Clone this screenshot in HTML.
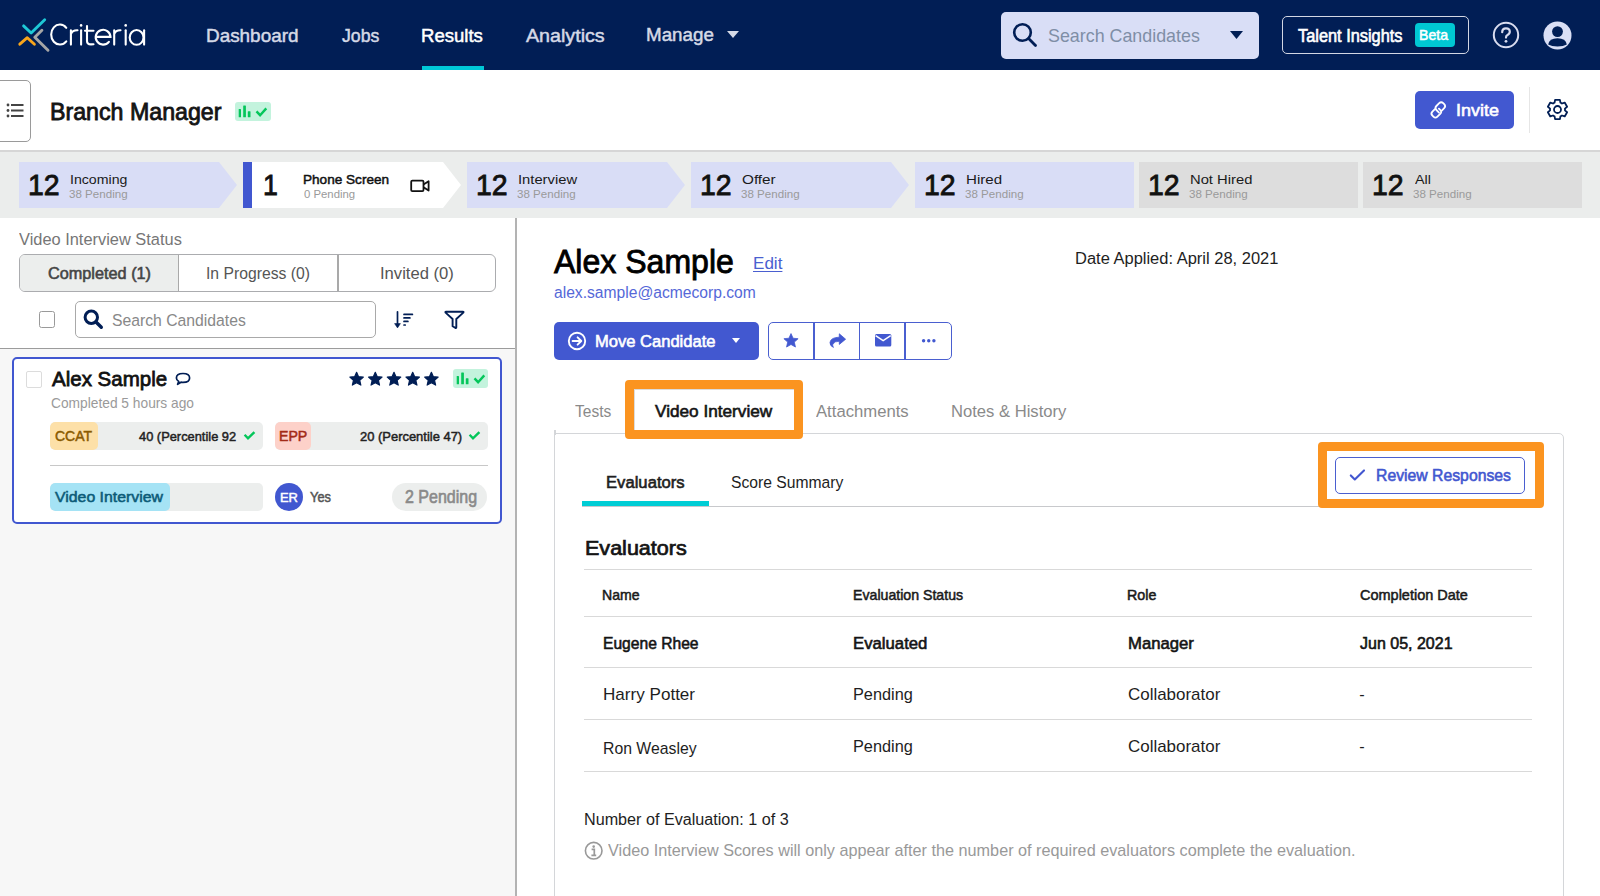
<!DOCTYPE html>
<html><head><meta charset="utf-8"><title>Criteria - Branch Manager</title>
<style>
html,body{margin:0;padding:0;}
body{width:1600px;height:896px;overflow:hidden;position:relative;background:#fff;font-family:"Liberation Sans",sans-serif;}
.a{position:absolute;box-sizing:border-box;}
.t{position:absolute;white-space:nowrap;line-height:1;transform-origin:0 0;font-family:"Liberation Sans",sans-serif;}
svg{position:absolute;overflow:visible;}

</style></head><body>
<!-- NAV -->
<div class="a" style="left:0;top:0;width:1600px;height:70px;background:#011e55"></div>
<svg style="left:0;top:0" width="160" height="70" viewBox="0 0 160 70">
  <g fill="none" stroke-linecap="round" stroke-linejoin="round" stroke-width="2.9">
    <polyline points="23.6,25.9 31.1,33 44.7,19.8" stroke="#1ec8d6"/>
    <polyline points="19.8,44.2 27.3,37.7 34.4,44.2" stroke="#f8a51c"/>
    <polyline points="41.9,30.2 34.8,37.2 48,50.3" stroke="#a6a6a6"/>
  </g>
  <g fill="none" stroke="#fff" stroke-width="2.1" stroke-linecap="round">
    <path d="M66.3,27.8 A8.7,10 0 1 0 66.3,41.3"/>
    <path d="M70.9,30.3 V44.6 M70.9,34 Q72.5,30.1 77.5,30.3"/>
    <path d="M81.1,30.3 V44.6"/>
    <path d="M87,26 V41 Q87,44.4 91,44.4 L93.5,44.3 M85,30.8 H93.5"/>
    <path d="M95.8,36.9 H110.5 A7.4,7.4 0 1 0 108.9,41.8"/>
    <path d="M114.2,30.3 V44.6 M114.2,34 Q115.8,30.1 120.5,30.3"/>
    <path d="M125.7,30.3 V44.6"/>
    <ellipse cx="136.6" cy="37.4" rx="6.9" ry="7.4"/>
    <path d="M144.1,30.3 V44.6"/>
  </g>
  <circle cx="81.1" cy="25.4" r="1.3" fill="#fff"/>
  <circle cx="125.7" cy="25.4" r="1.3" fill="#fff"/>
</svg>
<div class="a" style="left:422px;top:66px;width:62px;height:4px;background:#00c8d7"></div>
<svg style="left:727px;top:31px" width="12" height="7" viewBox="0 0 12 7"><path d="M0,0 H12 L6,7 Z" fill="#d5d9e6"/></svg>
<!-- nav search -->
<div class="a" style="left:1001px;top:12px;width:258px;height:47px;background:#d9def6;border-radius:5px"></div>
<svg style="left:1012px;top:22px" width="26" height="26" viewBox="0 0 26 26"><circle cx="10.5" cy="10.5" r="8.3" fill="none" stroke="#011e55" stroke-width="2.6"/><path d="M16.6,16.6 L23.5,23.5" stroke="#011e55" stroke-width="2.8" stroke-linecap="round"/></svg>
<svg style="left:1229.5px;top:31px" width="13" height="8" viewBox="0 0 13 8"><path d="M0,0 H13 L6.5,8 Z" fill="#011e55"/></svg>
<!-- talent insights -->
<div class="a" style="left:1282px;top:16px;width:187px;height:38px;border:1.5px solid #d3d7e3;border-radius:5px"></div>
<div class="a" style="left:1415px;top:23px;width:40px;height:24px;background:#00c8d3;border-radius:4px"></div>
<svg style="left:1492px;top:21px" width="28" height="28" viewBox="0 0 28 28"><circle cx="14" cy="14" r="12.2" fill="none" stroke="#d9dcef" stroke-width="2"/><path d="M10.2,11.2 Q10.2,7.3 14,7.3 Q17.8,7.3 17.8,10.8 Q17.8,13 15.2,14.2 Q14,14.8 14,16.6" fill="none" stroke="#d9dcef" stroke-width="2.2" stroke-linecap="round"/><circle cx="14" cy="20.3" r="1.4" fill="#d9dcef"/></svg>
<svg style="left:1543px;top:21px" width="29" height="29" viewBox="0 0 29 29"><defs><clipPath id="uc"><circle cx="14.5" cy="14.5" r="14"/></clipPath></defs><circle cx="14.5" cy="14.5" r="14" fill="#dadff5"/><circle cx="14.5" cy="10.6" r="5.4" fill="#011e55"/><path d="M5.2,23.6 Q6.2,17.2 14.5,17.2 Q22.8,17.2 23.8,23.6 Q20.5,25.6 14.5,25.6 Q8.5,25.6 5.2,23.6 Z" fill="#011e55"/></svg>

<!-- HEADER -->
<div class="a" style="left:0;top:150px;width:1600px;height:2px;background:#d6d6d6"></div>
<div class="a" style="left:-6px;top:80px;width:37px;height:62px;border:1.5px solid #9a9a9a;border-radius:5px;background:#fff"></div>
<svg style="left:6px;top:103px" width="18" height="16" viewBox="0 0 18 16"><g fill="#444"><circle cx="2" cy="2" r="1.4"/><circle cx="2" cy="7.5" r="1.4"/><circle cx="2" cy="13" r="1.4"/><rect x="5" y="1" width="12.5" height="2"/><rect x="5" y="6.5" width="12.5" height="2"/><rect x="5" y="12" width="12.5" height="2"/></g></svg>
<div class="a" style="left:235.2px;top:101.8px;width:35.4px;height:19px;background:#c3f3dd;border-radius:3px"></div>
<svg style="left:235.2px;top:101.8px" width="36" height="19" viewBox="0 0 36 19"><g fill="#04c65a"><rect x="3.7" y="6.9" width="2.3" height="8.4" rx="0.5"/><rect x="8.2" y="3.5" width="2.7" height="11.8" rx="0.5"/><rect x="12.8" y="9.2" width="2.7" height="6.1" rx="0.5"/></g><path d="M21.5,9.4 L25.1,13.2 L31.3,6.4" fill="none" stroke="#04c65a" stroke-width="2.4"/></svg>
<div class="a" style="left:1415px;top:91px;width:99px;height:38px;background:#4258d0;border-radius:5px"></div>
<svg style="left:1424.5px;top:98.2px" width="28" height="28" viewBox="0 0 28 28"><g fill="none" stroke="#fff" stroke-width="1.8" stroke-linecap="round"><path d="M14,14.6 L11.4,12 Q9.4,10 11.4,8 L14.2,5.2 Q16.2,3.2 18.2,5.2 L19.2,6.2 Q21.2,8.2 19.2,10.2 L16.8,12.6"/><path d="M9.9,11.2 L7.4,13.7 Q5.4,15.7 7.4,17.7 L8.4,18.7 Q10.4,20.7 12.4,18.7 L15.2,15.9 Q17.2,13.9 15.2,11.9 L13.9,10.6"/></g></svg>
<div class="a" style="left:1528.5px;top:87px;width:1.5px;height:46px;background:#e6e6e6"></div>
<svg style="left:1545.4px;top:97.25px" width="25" height="25" viewBox="0 0 25 25"><path fill="none" stroke="#011e55" stroke-width="1.8" stroke-linejoin="round" d="M9.57,5.60 L10.08,2.80 L14.92,2.80 L15.43,5.60 A7.5,7.5 0 0 1 17.01,6.51 L19.69,5.55 L22.11,9.74 L19.94,11.59 A7.5,7.5 0 0 1 19.94,13.41 L22.11,15.26 L19.69,19.45 L17.01,18.49 A7.5,7.5 0 0 1 15.43,19.40 L14.92,22.20 L10.08,22.20 L9.57,19.40 A7.5,7.5 0 0 1 7.99,18.49 L5.31,19.45 L2.89,15.26 L5.06,13.41 A7.5,7.5 0 0 1 5.06,11.59 L2.89,9.74 L5.31,5.55 L7.99,6.51 A7.5,7.5 0 0 1 9.57,5.60 Z"/><circle cx="12.5" cy="12.5" r="3.5" fill="none" stroke="#011e55" stroke-width="1.8"/></svg>

<!-- PIPELINE -->
<div class="a" style="left:0;top:152px;width:1600px;height:66px;background:#ebedec"></div>
<div class="a" style="left:19px;top:162px;width:218px;height:46px;background:#d9ddf6;clip-path:polygon(0 0,200px 0,218px 23px,200px 46px,0 46px)"></div>
<div class="a" style="left:243px;top:162px;width:218px;height:46px;background:#fff;clip-path:polygon(0 0,200px 0,218px 23px,200px 46px,0 46px)"></div>
<div class="a" style="left:243px;top:162px;width:9px;height:46px;background:#4157d0"></div>
<svg style="left:409.6px;top:179.2px" width="21" height="14" viewBox="0 0 21 14"><rect x="1.2" y="1.6" width="12.3" height="10.6" rx="1.2" fill="none" stroke="#111" stroke-width="1.8"/><path d="M13.5,5.6 L18.6,2.2 V11.6 L13.5,8.2" fill="none" stroke="#111" stroke-width="1.8" stroke-linejoin="round"/></svg>
<div class="a" style="left:467px;top:162px;width:218px;height:46px;background:#d9ddf6;clip-path:polygon(0 0,200px 0,218px 23px,200px 46px,0 46px)"></div>
<div class="a" style="left:691px;top:162px;width:218px;height:46px;background:#d9ddf6;clip-path:polygon(0 0,200px 0,218px 23px,200px 46px,0 46px)"></div>
<div class="a" style="left:915px;top:162px;width:219px;height:46px;background:#d9ddf6"></div>
<div class="a" style="left:1139px;top:162px;width:219px;height:46px;background:#dddddd"></div>
<div class="a" style="left:1363px;top:162px;width:219px;height:46px;background:#dddddd"></div>

<!-- LEFT PANEL -->
<div class="a" style="left:0;top:349px;width:515px;height:547px;background:#f7f7f7"></div>
<div class="a" style="left:0;top:347.5px;width:515px;height:1.5px;background:#9c9c9c"></div>
<div class="a" style="left:515px;top:218px;width:2px;height:678px;background:#b3b3b3"></div>
<div class="a" style="left:19px;top:254px;width:477px;height:37.5px;border:1.5px solid #abacaf;border-radius:6px;background:#fff;overflow:hidden"><div style="position:absolute;left:0;top:0;width:158px;height:100%;background:#eceeed;border-right:1.5px solid #a9a9a9"></div><div style="position:absolute;left:317px;top:0;width:1.5px;height:100%;background:#a9a9a9"></div></div>
<div class="a" style="left:38.5px;top:311px;width:16.5px;height:17px;border:1.5px solid #9a9a9a;border-radius:2.5px;background:#fff"></div>
<div class="a" style="left:75px;top:301px;width:301px;height:37px;border:1.5px solid #a9a9a9;border-radius:5px;background:#fff"></div>
<svg style="left:83px;top:309px" width="21" height="21" viewBox="0 0 21 21"><circle cx="8.3" cy="8.3" r="6.2" fill="none" stroke="#011e55" stroke-width="3"/><path d="M13,13 L18.3,18.3" stroke="#011e55" stroke-width="3.4" stroke-linecap="round"/></svg>
<svg style="left:393px;top:310px" width="22" height="20" viewBox="0 0 22 20"><g stroke="#011e55" stroke-width="1.7" fill="none" stroke-linecap="round"><path d="M4.5,1.8 V14.5"/><path d="M11,4.4 H19.4 M11,7.9 H16.9 M11,11.4 H14.9 M11,15 H12.2"/></g><path d="M1.6,13.6 H7.4 L4.5,17.9 Z" fill="#011e55" stroke="#011e55" stroke-width="0.6" stroke-linejoin="round"/></svg>
<svg style="left:443px;top:309px" width="23" height="21" viewBox="0 0 23 21"><path d="M3,2.7 H19.9 Q21,2.7 20.3,3.6 L13.3,10 V18.2 Q13.3,19.4 12.2,18.8 L9.6,17.2 V10 L2.6,3.6 Q2,2.7 3,2.7 Z" fill="none" stroke="#011e55" stroke-width="1.9" stroke-linejoin="round"/></svg>
<!-- card -->
<div class="a" style="left:12px;top:357px;width:490px;height:167px;border:2px solid #4157d0;border-radius:5px;background:#fff"></div>
<div class="a" style="left:26px;top:371px;width:16px;height:16.5px;border:1.5px solid #dcdcdc;border-radius:2px"></div>
<svg style="left:175px;top:372px" width="16" height="14" viewBox="0 0 16 14"><path d="M8,1.5 C12,1.5 14.6,3.3 14.6,6 C14.6,8.7 12,10.4 8,10.4 Q7,10.4 6,10.2 L2.6,12.4 L3.8,9.4 Q1.4,8.2 1.4,6 C1.4,3.3 4,1.5 8,1.5 Z" fill="none" stroke="#011e55" stroke-width="1.7" stroke-linejoin="round"/></svg>
<svg style="left:348.2px;top:371px" width="92" height="17" viewBox="0 0 92 17"><defs><path id="st" transform="translate(8,7.9) scale(0.9) translate(-8,-7.9)" d="M8,0.6 L10.2,5.4 L15.5,6 L11.5,9.6 L12.7,14.8 L8,12.1 L3.3,14.8 L4.5,9.6 L0.5,6 L5.8,5.4 Z"/></defs><g fill="#011e55" stroke="#011e55" stroke-width="1.3" stroke-linejoin="round"><use href="#st" x="0.6"/><use href="#st" x="19.3"/><use href="#st" x="38"/><use href="#st" x="56.7"/><use href="#st" x="75.4"/></g></svg>
<div class="a" style="left:453.2px;top:369.3px;width:35.1px;height:18.6px;background:#c3f3dd;border-radius:3px"></div>
<svg style="left:453.2px;top:369.3px" width="36" height="19" viewBox="0 0 36 19"><g fill="#04c65a"><rect x="3.7" y="6.9" width="2.3" height="8.4" rx="0.5"/><rect x="8.2" y="3.5" width="2.7" height="11.8" rx="0.5"/><rect x="12.8" y="9.2" width="2.7" height="6.1" rx="0.5"/></g><path d="M21.5,9.4 L25.1,13.2 L31.3,6.4" fill="none" stroke="#04c65a" stroke-width="2.4"/></svg>
<div class="a" style="left:50px;top:422px;width:213px;height:28px;background:#eceeed;border-radius:5px;overflow:hidden"><div style="position:absolute;left:0;top:0;width:48px;height:100%;background:#fde0a8;border-radius:5px"></div></div>
<svg style="left:242px;top:428px" width="15" height="14" viewBox="0 0 15 14"><path d="M2.6,6.8 L6,10.4 L12.4,4.2" fill="none" stroke="#04c65a" stroke-width="2.4" stroke-linecap="butt" stroke-linejoin="miter"/></svg>
<div class="a" style="left:275px;top:422px;width:213px;height:28px;background:#eceeed;border-radius:5px;overflow:hidden"><div style="position:absolute;left:0;top:0;width:36px;height:100%;background:#fdd1c9;border-radius:5px"></div></div>
<svg style="left:467px;top:428px" width="15" height="14" viewBox="0 0 15 14"><path d="M2.6,6.8 L6,10.4 L12.4,4.2" fill="none" stroke="#04c65a" stroke-width="2.4" stroke-linecap="butt" stroke-linejoin="miter"/></svg>
<div class="a" style="left:50px;top:465px;width:438px;height:1.2px;background:#c8c8c8"></div>
<div class="a" style="left:50px;top:483px;width:213px;height:28px;background:#eceeed;border-radius:5px;overflow:hidden"><div style="position:absolute;left:0;top:0;width:120px;height:100%;background:#a5e3f5;border-radius:5px"></div></div>
<div class="a" style="left:275.3px;top:482.5px;width:28px;height:28px;background:#4157d0;border-radius:50%"></div>
<div class="a" style="left:392px;top:482.5px;width:95px;height:28.5px;background:#eceeed;border-radius:14px"></div>

<!-- RIGHT -->
<div class="a" style="left:554px;top:322px;width:205px;height:37.5px;background:#4258d0;border-radius:5px"></div>
<svg style="left:567px;top:331px" width="21" height="20" viewBox="0 0 21 20"><circle cx="10" cy="10" r="8.2" fill="none" stroke="#fff" stroke-width="1.9"/><path d="M5.6,10 H14 M10.6,6.3 L14.3,10 L10.6,13.7" fill="none" stroke="#fff" stroke-width="1.9" stroke-linecap="round" stroke-linejoin="round"/></svg>
<svg style="left:731.5px;top:338px" width="9" height="6" viewBox="0 0 9 6"><path d="M0,0 H8 L4,5 Z" fill="#fff"/></svg>
<div class="a" style="left:768px;top:322px;width:184px;height:37.5px;border:1.5px solid #4a5fd0;border-radius:5px"><div style="position:absolute;left:44.2px;top:0;width:1.5px;height:100%;background:#4a5fd0"></div><div style="position:absolute;left:89.8px;top:0;width:1.5px;height:100%;background:#4a5fd0"></div><div style="position:absolute;left:135.4px;top:0;width:1.5px;height:100%;background:#4a5fd0"></div></div>
<svg style="left:783.2px;top:333px" width="16" height="15.2" viewBox="0 0 16 16"><path d="M8,0.6 L10.2,5.5 L15.5,6 L11.5,9.6 L12.7,14.8 L8,12.1 L3.3,14.8 L4.5,9.6 L0.5,6 L5.8,5.5 Z" fill="#4258d0" stroke="#4258d0" stroke-width="0.8" stroke-linejoin="round"/></svg>
<svg style="left:828.5px;top:333px" width="18" height="16" viewBox="0 0 18 16"><path d="M10.3,0.8 L16.6,6.2 L10.3,11.4 V8.3 Q5.6,8 3.8,11.2 Q3.4,12.6 4.4,14.4 Q0.6,12.6 1,9.4 Q1.8,4.4 10.3,4.2 Z" fill="#4258d0" stroke="#4258d0" stroke-width="0.8" stroke-linejoin="round"/></svg>
<svg style="left:875px;top:334.4px" width="16.3" height="12.5" viewBox="0 0 16.3 12.5"><rect x="0" y="0" width="16.3" height="12.5" rx="1.5" fill="#4258d0"/><path d="M0.6,1.6 L8.15,6.6 L15.7,1.6" fill="none" stroke="#fff" stroke-width="1.5"/></svg>
<svg style="left:920px;top:338px" width="17" height="5" viewBox="0 0 17 5"><g fill="#4258d0"><circle cx="3.6" cy="2.75" r="1.7"/><circle cx="8.75" cy="2.75" r="1.7"/><circle cx="13.9" cy="2.75" r="1.7"/></g></svg>

<!-- content box -->
<div class="a" style="left:554px;top:433px;width:1010px;height:480px;border:1.5px solid #d4d6d9;border-top-right-radius:5px"></div>
<div class="a" style="left:554px;top:429.5px;width:1.5px;height:5px;background:#d4d6d9"></div>
<!-- video interview tab (white with light border) -->
<div class="a" style="left:633.5px;top:388.5px;width:161px;height:46px;background:#fff;border:1px solid #dcdcdc;border-bottom:none"></div>
<div class="a" style="left:625px;top:380px;width:178px;height:59px;border:9px solid #fb9420;border-radius:4px"></div>
<!-- subtabs -->
<div class="a" style="left:582px;top:506px;width:950px;height:1px;background:#c8c9cc"></div>
<div class="a" style="left:582px;top:501px;width:127px;height:5px;background:#00cdd5"></div>
<div class="a" style="left:1318px;top:442px;width:226px;height:66px;background:#fff;border:9px solid #fb9420;border-radius:4px"></div>
<div class="a" style="left:1335px;top:457px;width:190px;height:37px;border:1.5px solid #4a5fd0;border-radius:5px"></div>
<svg style="left:1349px;top:468px" width="17" height="14" viewBox="0 0 17 14"><path d="M1.8,7.4 L5.8,11.4 L15,2.4" fill="none" stroke="#4257d0" stroke-width="2.1" stroke-linecap="round" stroke-linejoin="round"/></svg>
<!-- table lines -->
<div class="a" style="left:584px;top:569px;width:948px;height:1px;background:#d9d9d9"></div>
<div class="a" style="left:584px;top:616px;width:948px;height:1px;background:#d9d9d9"></div>
<div class="a" style="left:584px;top:667px;width:948px;height:1px;background:#d9d9d9"></div>
<div class="a" style="left:584px;top:719px;width:948px;height:1px;background:#d9d9d9"></div>
<div class="a" style="left:584px;top:771px;width:948px;height:1px;background:#d9d9d9"></div>
<svg style="left:583.5px;top:841px" width="20" height="20" viewBox="0 0 20 20"><circle cx="9.7" cy="9.7" r="8.3" fill="none" stroke="#999" stroke-width="1.6"/><circle cx="9.7" cy="5.6" r="1.3" fill="#999"/><path d="M7.6,8.4 H10.3 V14.3 M7.4,14.3 H12.2" fill="none" stroke="#999" stroke-width="1.7"/></svg>

<span class="t" style="left:205.97px;top:25.74px;font-size:19.2px;font-weight:400;-webkit-text-stroke:0.50px #d5d9e6;color:#d5d9e6;transform:scaleX(0.9849);">Dashboard</span>
<span class="t" style="left:341.54px;top:25.74px;font-size:19.2px;font-weight:400;-webkit-text-stroke:0.50px #d5d9e6;color:#d5d9e6;transform:scaleX(0.9200);">Jobs</span>
<span class="t" style="left:421.46px;top:25.74px;font-size:19.2px;font-weight:400;-webkit-text-stroke:0.50px #ffffff;color:#ffffff;transform:scaleX(0.9676);">Results</span>
<span class="t" style="left:526.04px;top:26.44px;font-size:19.2px;font-weight:400;-webkit-text-stroke:0.50px #d5d9e6;color:#d5d9e6;transform:scaleX(1.0251);">Analytics</span>
<span class="t" style="left:645.98px;top:24.74px;font-size:19.2px;font-weight:400;-webkit-text-stroke:0.50px #d5d9e6;color:#d5d9e6;transform:scaleX(0.9784);">Manage</span>
<span class="t" style="left:1048.03px;top:26.64px;font-size:18.5px;font-weight:400;color:#7f8ea6;transform:scaleX(0.9651);">Search Candidates</span>
<span class="t" style="left:1297.62px;top:27.60px;font-size:17.6px;font-weight:400;-webkit-text-stroke:0.63px #ffffff;color:#ffffff;transform:scaleX(0.9289);">Talent Insights</span>
<span class="t" style="left:1419.22px;top:26.80px;font-size:15px;font-weight:400;-webkit-text-stroke:0.54px #ffffff;color:#ffffff;transform:scaleX(0.9398);">Beta</span>
<span class="t" style="left:50.27px;top:100.48px;font-size:24px;font-weight:400;-webkit-text-stroke:0.85px #141414;color:#141414;transform:scaleX(0.9663);">Branch Manager</span>
<span class="t" style="left:1456.48px;top:102.78px;font-size:16.8px;font-weight:400;-webkit-text-stroke:0.60px #ffffff;color:#ffffff;transform:scaleX(1.0684);">Invite</span>
<span class="t" style="left:28.45px;top:171.25px;font-size:29px;font-weight:400;-webkit-text-stroke:0.85px #111;color:#111;transform:scaleX(0.9806);">12</span>
<span class="t" style="left:70.23px;top:172.57px;font-size:13.5px;font-weight:400;color:#1a1a1a;transform:scaleX(1.0478);">Incoming</span>
<span class="t" style="left:69.36px;top:188.51px;font-size:11.8px;font-weight:400;color:#9a9a9a;transform:scaleX(0.9814);">38 Pending</span>
<span class="t" style="left:262.55px;top:171.25px;font-size:29px;font-weight:400;-webkit-text-stroke:0.85px #111;color:#111;transform:scaleX(0.9222);">1</span>
<span class="t" style="left:303.19px;top:172.57px;font-size:13.5px;font-weight:400;-webkit-text-stroke:0.49px #111;color:#111;transform:scaleX(1.0061);">Phone Screen</span>
<span class="t" style="left:304.18px;top:188.51px;font-size:11.8px;font-weight:400;color:#9a9a9a;transform:scaleX(0.9623);">0 Pending</span>
<span class="t" style="left:476.45px;top:171.25px;font-size:29px;font-weight:400;-webkit-text-stroke:0.85px #111;color:#111;transform:scaleX(0.9806);">12</span>
<span class="t" style="left:518.20px;top:172.57px;font-size:13.5px;font-weight:400;color:#1a1a1a;transform:scaleX(1.0928);">Interview</span>
<span class="t" style="left:517.36px;top:188.51px;font-size:11.8px;font-weight:400;color:#9a9a9a;transform:scaleX(0.9814);">38 Pending</span>
<span class="t" style="left:700.45px;top:171.25px;font-size:29px;font-weight:400;-webkit-text-stroke:0.85px #111;color:#111;transform:scaleX(0.9806);">12</span>
<span class="t" style="left:742.17px;top:172.57px;font-size:13.5px;font-weight:400;color:#1a1a1a;transform:scaleX(1.1328);">Offer</span>
<span class="t" style="left:741.36px;top:188.51px;font-size:11.8px;font-weight:400;color:#9a9a9a;transform:scaleX(0.9814);">38 Pending</span>
<span class="t" style="left:924.45px;top:171.25px;font-size:29px;font-weight:400;-webkit-text-stroke:0.85px #111;color:#111;transform:scaleX(0.9806);">12</span>
<span class="t" style="left:966.18px;top:172.57px;font-size:13.5px;font-weight:400;color:#1a1a1a;transform:scaleX(1.1176);">Hired</span>
<span class="t" style="left:965.36px;top:188.51px;font-size:11.8px;font-weight:400;color:#9a9a9a;transform:scaleX(0.9814);">38 Pending</span>
<span class="t" style="left:1148.45px;top:171.25px;font-size:29px;font-weight:400;-webkit-text-stroke:0.85px #111;color:#111;transform:scaleX(0.9806);">12</span>
<span class="t" style="left:1190.20px;top:172.57px;font-size:13.5px;font-weight:400;color:#1a1a1a;transform:scaleX(1.0933);">Not Hired</span>
<span class="t" style="left:1189.36px;top:188.51px;font-size:11.8px;font-weight:400;color:#9a9a9a;transform:scaleX(0.9814);">38 Pending</span>
<span class="t" style="left:1372.45px;top:171.25px;font-size:29px;font-weight:400;-webkit-text-stroke:0.85px #111;color:#111;transform:scaleX(0.9806);">12</span>
<span class="t" style="left:1415.38px;top:172.57px;font-size:13.5px;font-weight:400;color:#1a1a1a;transform:scaleX(1.0638);">All</span>
<span class="t" style="left:1413.36px;top:188.51px;font-size:11.8px;font-weight:400;color:#9a9a9a;transform:scaleX(0.9814);">38 Pending</span>
<span class="t" style="left:18.69px;top:231.00px;font-size:16.3px;font-weight:400;color:#767676;transform:scaleX(1.0070);">Video Interview Status</span>
<span class="t" style="left:47.68px;top:264.88px;font-size:16.2px;font-weight:400;-webkit-text-stroke:0.58px #454545;color:#454545;transform:scaleX(1.0042);">Completed (1)</span>
<span class="t" style="left:205.65px;top:264.88px;font-size:16.2px;font-weight:400;color:#555;transform:scaleX(0.9712);">In Progress (0)</span>
<span class="t" style="left:380.10px;top:264.88px;font-size:16.2px;font-weight:400;color:#555;transform:scaleX(1.0264);">Invited (0)</span>
<span class="t" style="left:111.63px;top:311.90px;font-size:16.3px;font-weight:400;color:#888;transform:scaleX(0.9667);">Search Candidates</span>
<span class="t" style="left:51.93px;top:368.42px;font-size:21px;font-weight:400;-webkit-text-stroke:0.76px #111;color:#111;transform:scaleX(0.9762);">Alex Sample</span>
<span class="t" style="left:51.25px;top:396.34px;font-size:14.6px;font-weight:400;color:#9a9a9a;transform:scaleX(0.9427);">Completed 5 hours ago</span>
<span class="t" style="left:55.26px;top:428.55px;font-size:14px;font-weight:400;-webkit-text-stroke:0.50px #8a5a00;color:#8a5a00;transform:scaleX(0.9961);">CCAT</span>
<span class="t" style="left:139.32px;top:429.88px;font-size:13.6px;font-weight:400;-webkit-text-stroke:0.49px #222;color:#222;transform:scaleX(0.9455);">40 (Percentile 92</span>
<span class="t" style="left:279.23px;top:428.55px;font-size:14px;font-weight:400;-webkit-text-stroke:0.50px #a32a17;color:#a32a17;transform:scaleX(1.0094);">EPP</span>
<span class="t" style="left:359.83px;top:429.88px;font-size:13.6px;font-weight:400;-webkit-text-stroke:0.49px #222;color:#222;transform:scaleX(0.9520);">20 (Percentile 47)</span>
<span class="t" style="left:55.37px;top:489.82px;font-size:14.5px;font-weight:400;-webkit-text-stroke:0.52px #0c5b78;color:#0c5b78;transform:scaleX(1.0919);">Video Interview</span>
<span class="t" style="left:280.30px;top:491.09px;font-size:13px;font-weight:400;-webkit-text-stroke:0.47px #ffffff;color:#ffffff;transform:scaleX(0.9945);">ER</span>
<span class="t" style="left:310.27px;top:490.22px;font-size:14.5px;font-weight:400;-webkit-text-stroke:0.52px #555;color:#555;transform:scaleX(0.8872);">Yes</span>
<span class="t" style="left:404.60px;top:489.31px;font-size:17.7px;font-weight:400;-webkit-text-stroke:0.64px #8a8a8a;color:#8a8a8a;transform:scaleX(0.9049);">2 Pending</span>
<span class="t" style="left:553.83px;top:244.76px;font-size:33px;font-weight:400;-webkit-text-stroke:0.85px #000;color:#000;transform:scaleX(0.9709);">Alex Sample</span>
<span class="t" style="left:753.12px;top:256.45px;font-size:16px;font-weight:400;color:#4a5fd0;transform:scaleX(1.0662);text-decoration:underline;text-underline-offset:2px;">Edit</span>
<span class="t" style="left:553.61px;top:284.85px;font-size:16px;font-weight:400;color:#5568d8;transform:scaleX(0.9768);">alex.sample@acmecorp.com</span>
<span class="t" style="left:1074.82px;top:251.29px;font-size:15.6px;font-weight:400;color:#1e1e1e;transform:scaleX(1.0567);">Date Applied: April 28, 2021</span>
<span class="t" style="left:595.12px;top:332.81px;font-size:16.4px;font-weight:400;-webkit-text-stroke:0.59px #ffffff;color:#ffffff;transform:scaleX(1.0095);">Move Candidate</span>
<span class="t" style="left:575.17px;top:403.78px;font-size:16.8px;font-weight:400;color:#8a8a8a;transform:scaleX(0.9253);">Tests</span>
<span class="t" style="left:655.45px;top:403.78px;font-size:16.8px;font-weight:400;-webkit-text-stroke:0.60px #151515;color:#151515;transform:scaleX(1.0242);">Video Interview</span>
<span class="t" style="left:816.17px;top:403.78px;font-size:16.8px;font-weight:400;color:#8a8a8a;transform:scaleX(0.9937);">Attachments</span>
<span class="t" style="left:951.37px;top:403.78px;font-size:16.8px;font-weight:400;color:#8a8a8a;transform:scaleX(0.9894);">Notes &amp; History</span>
<span class="t" style="left:606.07px;top:475.18px;font-size:16.8px;font-weight:400;-webkit-text-stroke:0.60px #1e1e1e;color:#1e1e1e;transform:scaleX(0.9916);">Evaluators</span>
<span class="t" style="left:731.14px;top:475.18px;font-size:16.8px;font-weight:400;color:#1e1e1e;transform:scaleX(0.9334);">Score Summary</span>
<span class="t" style="left:1375.64px;top:467.18px;font-size:16.2px;font-weight:400;-webkit-text-stroke:0.58px #4257d0;color:#4257d0;transform:scaleX(0.9741);">Review Responses</span>
<span class="t" style="left:584.89px;top:537.73px;font-size:20.4px;font-weight:400;-webkit-text-stroke:0.73px #141414;color:#141414;transform:scaleX(1.0561);">Evaluators</span>
<span class="t" style="left:601.70px;top:587.81px;font-size:14.4px;font-weight:400;-webkit-text-stroke:0.52px #1a1a1a;color:#1a1a1a;transform:scaleX(0.9797);">Name</span>
<span class="t" style="left:853.43px;top:587.81px;font-size:14.4px;font-weight:400;-webkit-text-stroke:0.52px #1a1a1a;color:#1a1a1a;transform:scaleX(0.9831);">Evaluation Status</span>
<span class="t" style="left:1127.42px;top:587.81px;font-size:14.4px;font-weight:400;-webkit-text-stroke:0.52px #1a1a1a;color:#1a1a1a;transform:scaleX(0.9908);">Role</span>
<span class="t" style="left:1359.78px;top:587.81px;font-size:14.4px;font-weight:400;-webkit-text-stroke:0.52px #1a1a1a;color:#1a1a1a;transform:scaleX(1.0064);">Completion Date</span>
<span class="t" style="left:602.64px;top:635.28px;font-size:16.2px;font-weight:400;-webkit-text-stroke:0.58px #141414;color:#141414;transform:scaleX(0.9650);">Eugene Rhee</span>
<span class="t" style="left:853.37px;top:635.28px;font-size:16.2px;font-weight:400;-webkit-text-stroke:0.58px #141414;color:#141414;transform:scaleX(1.0333);">Evaluated</span>
<span class="t" style="left:1128.37px;top:635.28px;font-size:16.2px;font-weight:400;-webkit-text-stroke:0.58px #141414;color:#141414;transform:scaleX(1.0310);">Manager</span>
<span class="t" style="left:1359.68px;top:635.28px;font-size:16.2px;font-weight:400;-webkit-text-stroke:0.58px #141414;color:#141414;transform:scaleX(0.9885);">Jun 05, 2021</span>
<span class="t" style="left:602.53px;top:685.78px;font-size:16.2px;font-weight:400;color:#1e1e1e;transform:scaleX(1.0551);">Harry Potter</span>
<span class="t" style="left:853.39px;top:685.78px;font-size:16.2px;font-weight:400;color:#1e1e1e;transform:scaleX(1.0069);">Pending</span>
<span class="t" style="left:1128.37px;top:685.78px;font-size:16.2px;font-weight:400;color:#1e1e1e;transform:scaleX(1.0465);">Collaborator</span>
<span class="t" style="left:1359.19px;top:685.78px;font-size:16.2px;font-weight:400;color:#1e1e1e;transform:scaleX(1.0000);">-</span>
<span class="t" style="left:602.63px;top:740.28px;font-size:16.2px;font-weight:400;color:#1e1e1e;transform:scaleX(0.9750);">Ron Weasley</span>
<span class="t" style="left:853.39px;top:738.28px;font-size:16.2px;font-weight:400;color:#1e1e1e;transform:scaleX(1.0069);">Pending</span>
<span class="t" style="left:1128.37px;top:738.28px;font-size:16.2px;font-weight:400;color:#1e1e1e;transform:scaleX(1.0465);">Collaborator</span>
<span class="t" style="left:1359.19px;top:738.28px;font-size:16.2px;font-weight:400;color:#1e1e1e;transform:scaleX(1.0000);">-</span>
<span class="t" style="left:584.12px;top:812.45px;font-size:16px;font-weight:400;color:#1e1e1e;transform:scaleX(1.0095);">Number of Evaluation: 1 of 3</span>
<span class="t" style="left:608.16px;top:841.86px;font-size:17px;font-weight:400;color:#999;transform:scaleX(0.9545);">Video Interview Scores will only appear after the number of required evaluators complete the evaluation.</span>
</body></html>
